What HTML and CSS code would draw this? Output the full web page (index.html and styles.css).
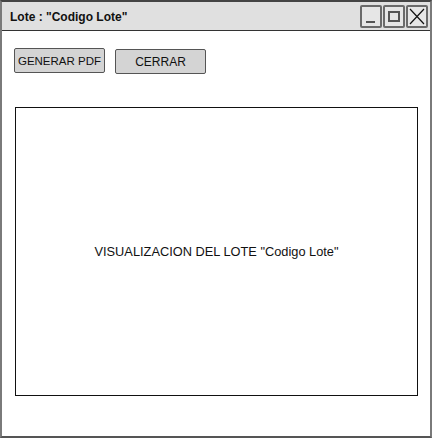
FILE: index.html
```html
<!DOCTYPE html>
<html>
<head>
<meta charset="utf-8">
<link rel="stylesheet" href="styles.css">
</head>
<body>
<div class="window">
  <div class="titlebar">
    <span class="title">Lote : "Codigo Lote"</span>
    <div class="wbtns">
      <div class="wbtn"><svg width="18" height="19" viewBox="0 0 18 19"><line x1="4" y1="15" x2="13" y2="15" stroke="#555" stroke-width="2"/></svg></div>
      <div class="wbtn"><svg width="18" height="19" viewBox="0 0 18 19"><rect x="4" y="5" width="10" height="9" fill="none" stroke="#555" stroke-width="2"/></svg></div>
      <div class="wbtn"><svg width="18" height="19" viewBox="0 0 18 19"><path d="M2 2 L16 17 M16 2 L2 17" stroke="#111" stroke-width="1.2" fill="none"/></svg></div>
    </div>
  </div>
  <div class="content">
    <div class="toolbar">
      <div class="btn">GENERAR PDF</div>
      <div class="btn btn2">CERRAR</div>
    </div>
    <div class="panel">VISUALIZACION DEL LOTE "Codigo Lote"</div>
  </div>
</div>
</body>
</html>
```
FILE: styles.css
```css
html, body { margin: 0; padding: 0; background: #fff; }
body { font-family: "Comic Sans MS", "Liberation Sans", sans-serif; color: #111; }
.window {
  width: 432px; height: 438px; box-sizing: border-box;
  border: 2px solid #7a7a7a; border-top-color: #444; border-bottom-color: #555;
  display: flex; flex-direction: column;
}
.titlebar {
  height: 28px; background: #e0e0e0; border-bottom: 1px solid #333;
  display: flex; align-items: center; justify-content: space-between;
  padding: 0 2px 0 8px;
}
.title { font-weight: bold; font-size: 12px; margin-top: 1px; }
.wbtns { display: flex; gap: 1px; margin-top: 1px; }
.wbtn {
  width: 22px; height: 23px; box-sizing: border-box;
  border: 2px solid #6a6a6a; border-radius: 2px; background: #e6e6e6;
  display: flex; align-items: center; justify-content: center;
}
.wbtn svg { display: block; }
.content { padding: 17px 12px 0 12px; display: flex; flex-direction: column; }
.toolbar { display: flex; gap: 10px; align-items: flex-start; }
.btn {
  width: 91px; height: 25px; box-sizing: border-box;
  border: 1.5px solid #555; border-radius: 2px; background: #d4d4d4;
  font-size: 11.5px; display: flex; align-items: center; justify-content: center;
}
.btn2 { margin-top: 1px; font-size: 12px; }
.panel {
  margin: 33px 0 0 1px; width: 403px; height: 289px; box-sizing: border-box;
  border: 1px solid #111; display: flex; align-items: center; justify-content: center;
  font-size: 12.8px;
}
```
